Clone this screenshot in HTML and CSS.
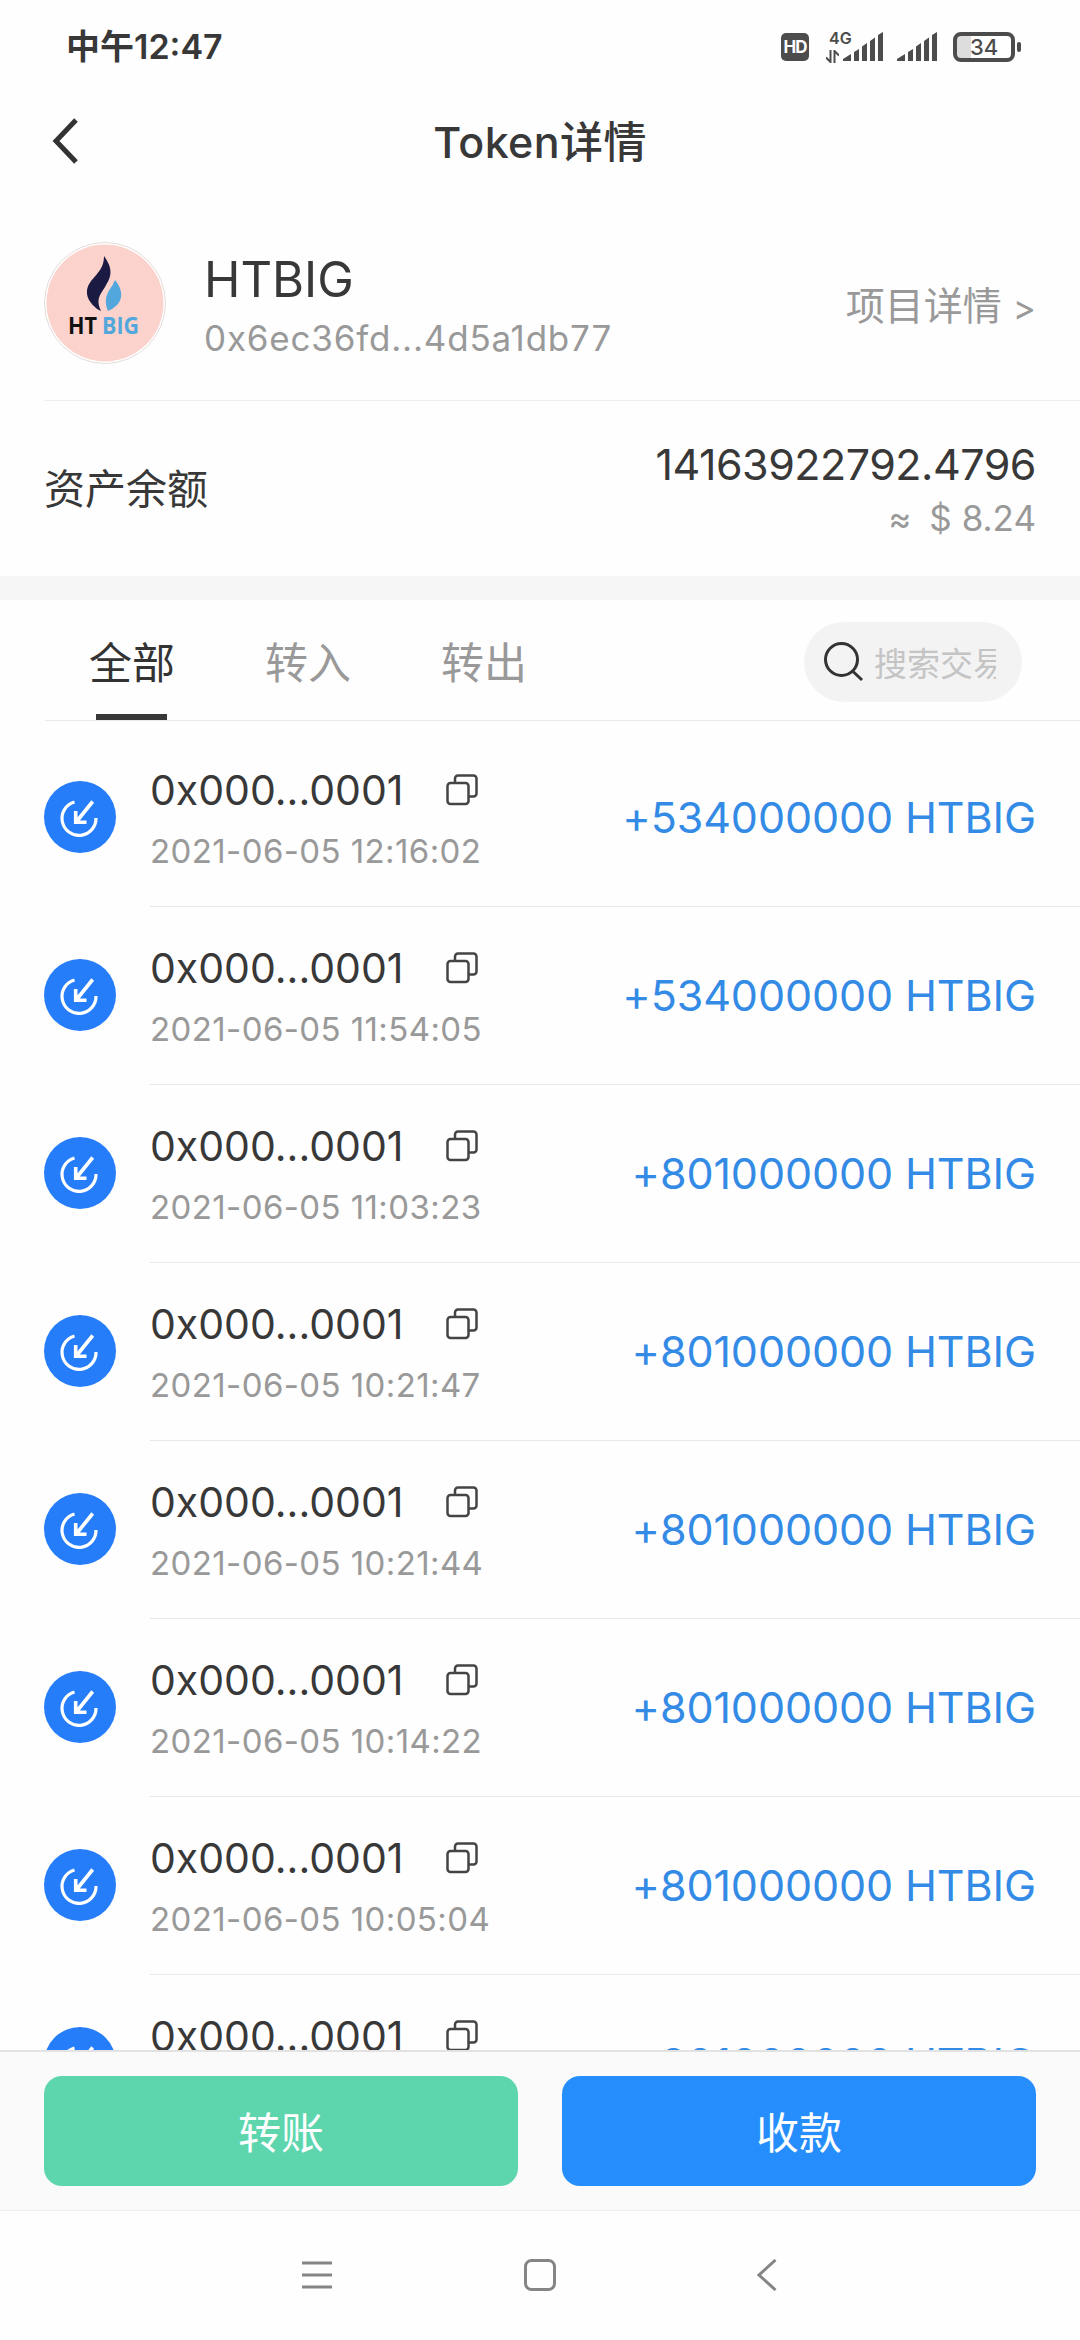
FILE: index.html
```html
<!DOCTYPE html>
<html lang="zh">
<head>
<meta charset="utf-8">
<title>Token详情</title>
<link rel="stylesheet" href="styles.css">
</head>
<body>

<!-- shared icons -->
<svg width="0" height="0" class="defs">
  <symbol id="receive" viewBox="0 0 72 72">
    <circle cx="36" cy="36" r="36" fill="#267dfa"/>
    <path d="M30.500 21A17 17 0 1 0 52 37" fill="none" stroke="#fff" stroke-width="3.200"/>
    <path d="M48.700 20.500L33 40M31.700 30V41.300H42.500" fill="none" stroke="#fff" stroke-width="3.600"/>
  </symbol>
  <symbol id="copy" viewBox="0 0 32 32">
    <rect x="1.500" y="9" width="21" height="21" rx="3"/>
    <path d="M9 9V4.500A3 3 0 0 1 12 1.500H27.500A3 3 0 0 1 30.500 4.500V19.500A3 3 0 0 1 27.500 22.500H23"/>
  </symbol>
  <symbol id="signal" viewBox="0 0 40 30">
    <path d="M0 29V27L8 22V29ZM11 20L16 17V29H11ZM19 14.500L24 11V29H19ZM27 9L32 5.500V29H27ZM35 3L40 0V29H35Z"/>
  </symbol>
</svg>

<div class="status">
  <div class="time">中午12:47</div>
  <div class="status-icons">
    <span class="hd">HD</span>
    <span class="net">
      <b>4G</b>
      <svg width="13" height="13" viewBox="0 0 13 13"><path d="M4.500 0V12L0 7.500M8.500 13V1L13 5.500" fill="none" stroke="#4c4c4c" stroke-width="2"/></svg>
    </span>
    <svg class="signal" width="40" height="30"><use href="#signal"/></svg>
    <svg class="signal two" width="40" height="30"><use href="#signal"/></svg>
    <span class="battery">34</span>
  </div>
</div>

<div class="header">
  <svg class="back" width="28" height="48" viewBox="0 0 28 48"><path d="M24 3L4 24L24 45"/></svg>
  <h1>Token详情</h1>
</div>

<div class="token">
  <svg class="logo" width="122" height="122" viewBox="0 0 122 122">
    <circle cx="61" cy="61" r="60.500" fill="#fff" stroke="#e5dcda"/>
    <circle cx="61" cy="61" r="58.500" fill="#fcd3cc"/>
    <path d="M60 14C70 28 67 35 61 45C55 54 52 58 57 69C52 67 44 60 43 52C42 43 48 38 53 32C58 26 60 21 60 14Z" fill="#1b1a42"/>
    <path d="M71 38C80 49 78 58 73 63Q69 67 64 69C60 60 62 53 66 47Q69 43 71 38Z" fill="#52a7dc"/>
    <text x="24" y="92" textLength="29" lengthAdjust="spacingAndGlyphs" class="ht">HT</text>
    <text x="58" y="92" textLength="37" lengthAdjust="spacingAndGlyphs" class="big">BIG</text>
  </svg>
  <div class="token-name">
    <h2>HTBIG</h2>
    <p>0x6ec36fd...4d5a1db77</p>
  </div>
  <div class="more">项目详情 <span>&gt;</span></div>
</div>

<div class="balance">
  <div class="label">资产余额</div>
  <div class="amount">
    <h3>14163922792.4796</h3>
    <p><span>≈</span>$ 8.24</p>
  </div>
</div>

<div class="tabs">
  <div class="tab active">全部</div>
  <div class="tab">转入</div>
  <div class="tab">转出</div>
  <div class="search">
    <svg width="40" height="40" viewBox="0 0 40 40"><circle cx="17.500" cy="17.500" r="16"/><path d="M28.500 29L38 38"/></svg>
    <span>搜索交易</span>
  </div>
</div>

<div class="list" id="list"></div>

<div class="actions">
  <button class="send">转账</button>
  <button class="get">收款</button>
</div>

<div class="nav">
  <svg width="32" height="32" viewBox="0 0 32 32"><path d="M1 4H31M1 16H31M1 28H31"/></svg>
  <svg width="32" height="32" viewBox="0 0 32 32"><rect x="1.500" y="1.500" width="29" height="29" rx="6"/></svg>
  <svg class="nav-back" width="20" height="32" viewBox="0 0 20 32"><path d="M18.500 1L2 16L18.500 31"/></svg>
</div>

<script>
var rows = [
  ["2021-06-05 12:16:02", "534000000"],
  ["2021-06-05 11:54:05", "534000000"],
  ["2021-06-05 11:03:23", "801000000"],
  ["2021-06-05 10:21:47", "801000000"],
  ["2021-06-05 10:21:44", "801000000"],
  ["2021-06-05 10:14:22", "801000000"],
  ["2021-06-05 10:05:04", "801000000"],
  ["", "801000000"]
];
var html = "";
for (var i = 0; i < rows.length; i++) {
  html += `<div class="row">
    <svg class="icon" width="72" height="72"><use href="#receive"/></svg>
    <div class="row-body">
      <div class="tx">
        <div class="addr">0x000...0001 <svg class="copy" width="32" height="32"><use href="#copy"/></svg></div>
        <div class="date">${rows[i][0]}</div>
      </div>
      <div class="value">+${rows[i][1]} HTBIG</div>
    </div>
  </div>`;
}
document.getElementById("list").innerHTML = html;
</script>

</body>
</html>
```
FILE: styles.css
```css
* {
  box-sizing: border-box;
}

body {
  margin: 0;
  width: 1080px;
  height: 2340px;
  overflow: hidden;
  display: flex;
  flex-direction: column;
  background: #fefefe;
  color: #383838;
  font-family: Inter, "Noto Sans CJK SC", sans-serif;
}

h1, h2, h3, p {
  margin: 0;
  font-weight: 400;
}

.defs {
  position: absolute;
}

/* status bar */
.status {
  height: 94px;
  flex: none;
  display: flex;
  justify-content: space-between;
  padding: 0 60px 0 66px;
}

.time {
  font-size: 34px;
  font-weight: 600;
  line-height: 94px;
}

.status-icons {
  display: flex;
  align-items: center;
  color: #4c4c4c;
}

.hd {
  width: 28px;
  height: 28px;
  border-radius: 5px;
  background: #4c4c4c;
  color: #fff;
  font-size: 17px;
  font-weight: 700;
  line-height: 29px;
  text-align: center;
  letter-spacing: -1px;
}

.net {
  display: flex;
  flex-direction: column;
  margin-left: 17px;
  width: 17px;
  height: 31px;
}

.net b {
  font-size: 16px;
  line-height: 12px;
  font-weight: 600;
  margin-left: 3px;
}

.net svg {
  margin-top: 6px;
}

.signal {
  fill: #4c4c4c;
}

.signal.two {
  margin: 0 16px 0 14px;
}

.battery {
  position: relative;
  width: 62px;
  height: 30px;
  margin-right: 5px;
  border: 4px solid #4c4c4c;
  border-radius: 8px;
  background: linear-gradient(90deg, #ddd 14px, #fff 14px);
  font-size: 22px;
  font-weight: 500;
  line-height: 23px;
  text-align: center;
}

.battery::after {
  content: "";
  position: absolute;
  right: -10px;
  top: 6px;
  width: 4px;
  height: 10px;
  border-radius: 2px;
  background: #4c4c4c;
}

/* header */
.header {
  position: relative;
  height: 94px;
  flex: none;
}

.back {
  position: absolute;
  left: 52px;
  top: 23px;
  fill: none;
  stroke: #333;
  stroke-width: 5;
}

.header h1 {
  font-size: 43px;
  font-weight: 500;
  line-height: 96px;
  text-align: center;
  letter-spacing: 0.4px;
}

/* token */
.token {
  height: 213px;
  flex: none;
  display: flex;
  align-items: center;
  margin-left: 44px;
  padding: 18px 44px 0 0;
  border-bottom: 1px solid #eee;
}

.ht, .big {
  font-family: "Open Sans", sans-serif;
  font-size: 24px;
  font-weight: 700;
  fill: #111;
}

.big {
  fill: #52a7dc;
}

.token-name {
  flex: 1;
  margin-left: 38px;
  padding-top: 8px;
}

.token-name h2 {
  font-size: 49px;
  line-height: 62px;
}

.token-name p {
  font-size: 35px;
  line-height: 54px;
  letter-spacing: 0.8px;
  color: #999;
}

.more {
  font-size: 39px;
  color: #999;
}

.more span {
  font-size: 35px;
}

/* balance */
.balance {
  height: 199px;
  flex: none;
  display: flex;
  justify-content: space-between;
  padding: 0 44px;
  border-bottom: 24px solid #f6f6f6;
}

.label {
  font-size: 41px;
  line-height: 176px;
}

.amount {
  padding-top: 36px;
  text-align: right;
}

.amount h3 {
  font-size: 43px;
  line-height: 54px;
  letter-spacing: -0.5px;
}

.amount p {
  font-size: 35px;
  line-height: 54px;
  color: #999;
}

.amount p span {
  margin-right: 18px;
}

/* tabs */
.tabs {
  height: 121px;
  flex: none;
  display: flex;
  margin-left: 45px;
  padding-left: 44px;
  border-bottom: 1px solid #eaeaea;
}

.tab {
  position: relative;
  width: 88px;
  margin-right: 88px;
  font-size: 43px;
  line-height: 126px;
  color: #999;
}

.tab.active {
  color: #333;
}

.tab.active::after {
  content: "";
  position: absolute;
  left: 7px;
  bottom: 0;
  width: 71px;
  height: 6px;
  background: #383838;
}

.search {
  width: 218px;
  height: 80px;
  margin: 22px 58px 0 auto;
  padding: 0 26px 0 20px;
  border-radius: 40px;
  background: #f3f3f3;
  display: flex;
  align-items: center;
}

.search svg {
  flex: none;
  fill: none;
  stroke: #333;
  stroke-width: 3;
}

.search span {
  margin-left: 10px;
  font-size: 33px;
  color: #c4c4c4;
  white-space: nowrap;
  overflow: hidden;
}

/* transactions */
.list {
  flex: 1;
  overflow: hidden;
  padding-top: 8px;
}

.row {
  height: 178px;
  display: flex;
  align-items: center;
  padding-left: 44px;
}

.icon {
  margin-bottom: 2px;
}

.row-body {
  flex: 1;
  height: 178px;
  display: flex;
  justify-content: space-between;
  margin-left: 34px;
  padding: 34px 44px 0 0;
  border-bottom: 1px solid #e8e8e8;
}

.addr {
  display: flex;
  align-items: center;
  font-size: 41px;
  line-height: 54px;
}

.copy {
  margin-left: 43px;
  fill: none;
  stroke: #444;
  stroke-width: 2.500;
}

.date {
  margin-top: 8px;
  font-size: 33px;
  line-height: 52px;
  letter-spacing: 0.4px;
  color: #999;
}

.value {
  font-size: 43px;
  line-height: 108px;
  letter-spacing: -0.1px;
  color: #348be6;
}

/* bottom */
.actions {
  height: 161px;
  flex: none;
  display: flex;
  gap: 44px;
  padding: 24px 44px;
  background: #fafafa;
  border-top: 2px solid #e2e2e2;
  border-bottom: 1px solid #eee;
}

.actions button {
  flex: 1;
  height: 110px;
  padding: 0 0 2px;
  border: none;
  border-radius: 18px;
  color: #fff;
  font-family: inherit;
  font-size: 43px;
}

.send {
  background: #5dd6ae;
}

.get {
  background: #268efc;
}

.nav {
  height: 129px;
  flex: none;
  display: flex;
  padding: 48px 0 0 301px;
  gap: 191px;
  fill: none;
  stroke: #858585;
  stroke-width: 3;
}

.nav-back {
  margin-left: 10px;
}
```
